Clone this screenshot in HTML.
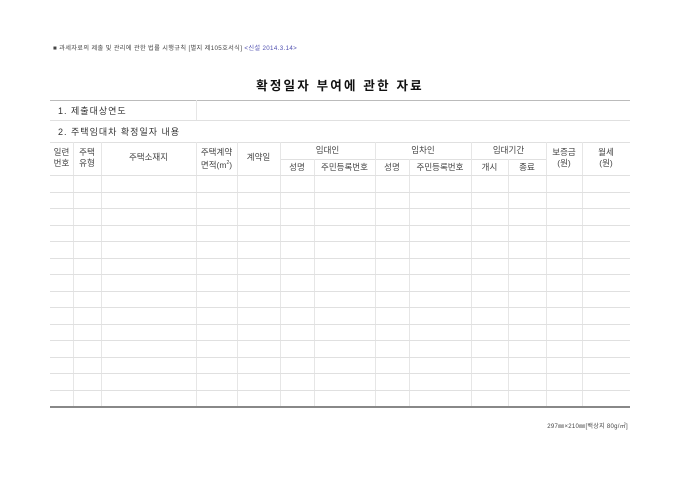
<!DOCTYPE html>
<html><head><meta charset="utf-8"><style>
body{margin:0;width:680px;height:481px;background:#fff;position:relative;overflow:hidden;font-family:"Liberation Sans","Noto Sans CJK KR",sans-serif;color:#333}
.a{position:absolute}
.h{position:absolute;height:1px;background:#e0e0e0}
.v{position:absolute;width:1px;background:#e6e6e6}
.t{position:absolute;font-size:8.5px;color:#444;text-align:center;line-height:11px;white-space:nowrap}
</style></head><body>
<div class="a" style="left:53px;top:43px;font-size:6.2px;letter-spacing:0.35px;color:#444;white-space:nowrap">■ 과세자료의 제출 및 관리에 관한 법률 시행규칙 [별지 제105호서식] <span style="color:#5050b0">&lt;신설 2014.3.14&gt;</span></div>
<div class="a" style="left:50px;width:580px;top:75px;text-align:center;font-size:12.5px;font-weight:bold;color:#111;letter-spacing:2.2px">확정일자 부여에 관한 자료</div>
<div class="h" style="left:50px;width:580px;top:100px;background:#bbb"></div>
<div class="h" style="left:50px;width:580px;top:120px"></div>
<div class="h" style="left:50px;width:580px;top:142px"></div>
<div class="v" style="left:196px;top:100px;height:20px"></div>
<div class="a" style="left:58px;top:104px;font-size:9px;letter-spacing:1px;color:#333;white-space:nowrap">1. 제출대상연도</div>
<div class="a" style="left:58px;top:125px;font-size:9px;letter-spacing:1px;color:#333;white-space:nowrap">2. 주택임대차 확정일자 내용</div>
<div class="h" style="left:280px;width:266px;top:159px"></div>
<div class="v" style="left:73px;top:142px;height:265px"></div>
<div class="v" style="left:101px;top:142px;height:265px"></div>
<div class="v" style="left:196px;top:142px;height:265px"></div>
<div class="v" style="left:237px;top:142px;height:265px"></div>
<div class="v" style="left:280px;top:142px;height:265px"></div>
<div class="v" style="left:314px;top:159px;height:248px"></div>
<div class="v" style="left:375px;top:142px;height:265px"></div>
<div class="v" style="left:409px;top:159px;height:248px"></div>
<div class="v" style="left:471px;top:142px;height:265px"></div>
<div class="v" style="left:508px;top:159px;height:248px"></div>
<div class="v" style="left:546px;top:142px;height:265px"></div>
<div class="v" style="left:582px;top:142px;height:265px"></div>
<div class="h" style="left:50px;width:580px;top:175px"></div>
<div class="h" style="left:50px;width:580px;top:192px"></div>
<div class="h" style="left:50px;width:580px;top:208px"></div>
<div class="h" style="left:50px;width:580px;top:225px"></div>
<div class="h" style="left:50px;width:580px;top:241px"></div>
<div class="h" style="left:50px;width:580px;top:258px"></div>
<div class="h" style="left:50px;width:580px;top:274px"></div>
<div class="h" style="left:50px;width:580px;top:291px"></div>
<div class="h" style="left:50px;width:580px;top:307px"></div>
<div class="h" style="left:50px;width:580px;top:324px"></div>
<div class="h" style="left:50px;width:580px;top:340px"></div>
<div class="h" style="left:50px;width:580px;top:357px"></div>
<div class="h" style="left:50px;width:580px;top:373px"></div>
<div class="h" style="left:50px;width:580px;top:390px"></div>
<div class="a" style="left:50px;width:580px;top:406px;height:2px;background:#888"></div>
<div class="t" style="left:50px;width:23px;top:147px">일련<br>번호</div>
<div class="t" style="left:73px;width:28px;top:147px">주택<br>유형</div>
<div class="t" style="left:101px;width:95px;top:152px">주택소재지</div>
<div class="t" style="left:196px;width:41px;top:147px">주택계약<br>면적(m<sup style="font-size:5px">2</sup>)</div>
<div class="t" style="left:237px;width:43px;top:152px">계약일</div>
<div class="t" style="left:280px;width:95px;top:145px">임대인</div>
<div class="t" style="left:280px;width:34px;top:162px">성명</div>
<div class="t" style="left:314px;width:61px;top:162px">주민등록번호</div>
<div class="t" style="left:375px;width:96px;top:145px">임차인</div>
<div class="t" style="left:375px;width:34px;top:162px">성명</div>
<div class="t" style="left:409px;width:62px;top:162px">주민등록번호</div>
<div class="t" style="left:471px;width:75px;top:145px">임대기간</div>
<div class="t" style="left:471px;width:37px;top:162px">개시</div>
<div class="t" style="left:508px;width:38px;top:162px">종료</div>
<div class="t" style="left:546px;width:36px;top:147px">보증금<br>(원)</div>
<div class="t" style="left:582px;width:48px;top:147px">월세<br>(원)</div>
<div class="a" style="left:500px;width:128px;top:421px;text-align:right;font-size:6px;letter-spacing:0.3px;color:#444;white-space:nowrap">297㎜×210㎜[백상지 80g/㎡]</div>
</body></html>
